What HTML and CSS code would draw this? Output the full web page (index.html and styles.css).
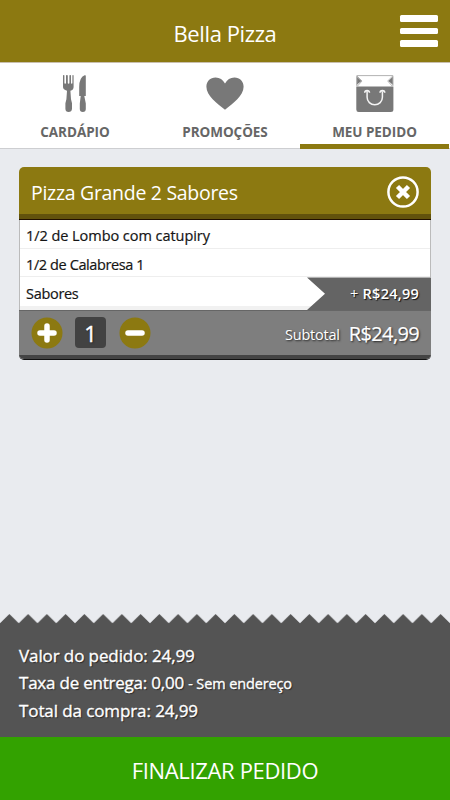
FILE: index.html
```html
<!DOCTYPE html>
<html lang="pt-BR">
<head>
<meta charset="utf-8">
<title>Bella Pizza</title>
<link rel="stylesheet" href="styles.css">
</head>
<body>
<header class="topbar">
  <h1><span>Bella Pizza</span></h1>
  <button class="menu" aria-label="Menu"><i></i><i></i><i></i></button>
</header>
<nav class="tabs">
  <a class="tab">
    <svg class="icon" width="38" height="40" viewBox="0 0 38 40"><path d="M7 2.600Q7 2 7.700 2t.7.600V10q0 .8.800.8T10 10V2.600q0-.6.900-.6t.9.600V10q0 .8.800.8t.8-.8V2.600q0-.6.800-.6t.8.600V10q0 .8.700.8t.7-.8V2.600q0-.6.600-.6t.6.600v11.500q0 3-3.200 3.600l.6 8.500 1 4v5.500Q15.700 39 12.600 39T9.400 35.700v-5.500l1-4 .6-8.500Q7 17 7 14.100zM29.800 2.800v20.200h-1.500l1.500 7.600V36q0 3-3 3t-3-3v-5.400l.9-7.600h-1.500V14q0-9.500 5.400-11.700 1.200-.4 1.200.5z"/></svg>
    <span class="name">CARDÁPIO</span>
  </a>
  <a class="tab">
    <svg class="icon" width="38" height="40" viewBox="0 0 38 40"><path d="M19 36.800C11 30.200.4 22.800.4 13.800.4 8.400 4.200 4.600 9.600 4.600c4.200 0 7.200 2.200 9.400 5.800 2.200-3.600 5.200-5.800 9.400-5.800 5.400 0 9.200 3.800 9.200 9.200 0 9-10.600 16.400-18.600 23z"/></svg>
    <span class="name">PROMOÇÕES</span>
  </a>
  <a class="tab active">
    <svg class="icon" width="38" height="40" viewBox="0 0 38 40"><path d="M.3 13.500H37.400V36.500a2.500 2.500 0 0 1-2.500 2.500h-32A2.500 2.500 0 0 1 .3 36.500z"/><path d="M.6 3.500V12l4.800-4zM37.100 3.500V12l-4.800-4z"/><path d="M.8 13V2.600h36.100V13M1 3l5 5-4.500 5M36.700 3l-5 5 4.500 5" fill="none" stroke="#aaa" stroke-width=".9"/><path d="M8.700 19.800a2.400 2.400 0 0 1 4.800 0M24 19.800a2.400 2.400 0 0 1 4.800 0M11.100 18.500v5.700a7.650 7.650 0 0 0 15.300 0v-5.700" fill="none" stroke="#f4f4f4" stroke-width="1.500"/></svg>
    <span class="name">MEU PEDIDO</span>
  </a>
</nav>
<main>
  <section class="card">
    <div class="card-head">
      <h2>Pizza Grande 2 Sabores</h2>
      <svg width="32" height="32" viewBox="0 0 32 32"><circle cx="16" cy="16" r="14.600" fill="none" stroke="#fff" stroke-width="2.500"/><path d="M10.500 10.500l11 11M21.500 10.500l-11 11" stroke="#fff" stroke-width="4.500"/></svg>
    </div>
    <div class="row"><span class="wide">1/2 de Lombo com catupiry</span></div>
    <div class="row"><span class="tight">1/2 de Calabresa 1</span></div>
    <div class="row last"><span>Sabores</span><div class="price"><span>+ <b>R$24,99</b></span></div></div>
    <div class="card-foot">
      <svg class="round" width="32" height="32" viewBox="0 0 32 32"><circle cx="16" cy="16" r="15.500"/><path d="M9 16h14M16 9v14"/></svg>
      <span class="qty">1</span>
      <svg class="round" width="32" height="32" viewBox="0 0 32 32"><circle cx="16" cy="16" r="15.500"/><path d="M9 16h14"/></svg>
      <span class="sub">Subtotal</span><span class="amount">R$24,99</span>
    </div>
  </section>
</main>
<svg class="zigzag" width="450" height="10"><defs><pattern id="teeth" width="18.750" height="10" patternUnits="userSpaceOnUse"><path d="M0 10V9.300L9.375 0l9.375 9.300V10z" fill="#545454"/></pattern></defs><rect width="450" height="10" fill="url(#teeth)"/></svg>
<section class="totals">
  <p>Valor do pedido: 24,99</p>
  <p class="fee">Taxa de entrega: 0,00 <small>- Sem endereço</small></p>
  <p>Total da compra: 24,99</p>
</section>
<button class="finish"><span>FINALIZAR PEDIDO</span></button>
</body>
</html>
```
FILE: styles.css
```css
* { box-sizing: border-box; }
body { margin: 0; height: 800px; display: flex; flex-direction: column; background: #e9ebef; font-family: "Open Sans", "Noto Sans", sans-serif; overflow: hidden; }
h1, h2, p { margin: 0; font-weight: 400; }
button { border: 0; padding: 0; font: inherit; }
span { white-space: nowrap; }
.topbar { height: 63px; flex: none; display: grid; grid-template-columns: 50px 1fr 50px; align-items: center; background: #8c7911; border-bottom: 1px solid #c9bfae; color: #fff; }
h1 { grid-column: 2; text-align: center; font-size: 22px; line-height: 30px; padding-top: 3px; letter-spacing: -.4px; }
.menu { display: flex; flex-direction: column; gap: 6px; background: none; }
.menu i { width: 38px; height: 6.700px; border-radius: 1.500px; background: #fff; }
.tabs { height: 86px; flex: none; display: grid; grid-template-columns: repeat(3, 1fr); background: #fff; border-bottom: 1px solid #cdced1; }
.tab { display: flex; flex-direction: column; align-items: center; padding-top: 10px; color: #666; }
.icon { fill: #787878; }
.name { margin-top: 9px; font-size: 13.500px; line-height: 20px; font-weight: 700; letter-spacing: -.05px; }
.active { border-bottom: 5px solid #8c7911; margin-bottom: -1px; margin-right: 1px; }
main { flex: 1; padding: 18px 19px 0; }
.card { height: 193px; border-radius: 5px; overflow: hidden; background: #fff; border-bottom: 1px solid #111; }
.card-head { height: 53px; display: flex; align-items: center; justify-content: space-between; padding: 0 12px 3px; background: linear-gradient(#8c7911 47px, #62520c 47px 52px, #221000 52px); color: #fff; }
h2 { font-size: 19.500px; letter-spacing: -.3px; }
.row { height: 28.700px; display: flex; align-items: center; padding: 4px 0 0 6px; border: solid #bbb; border-width: 0 1px; box-shadow: inset 0 -1px #eee; font-size: 14.500px; line-height: 20px; color: #151515; font-weight: 500; letter-spacing: -.3px; -webkit-text-stroke: .2px; }
.wide { letter-spacing: -.05px; }
.tight { letter-spacing: -.4px; }
.last { height: 32.600px; padding-top: 0; border-right: 0; box-shadow: inset 0 -4px #f1f1f1; justify-content: space-between; }
.price { width: 124px; height: 100%; display: flex; align-items: center; justify-content: flex-end; padding-right: 12px; color: #fff; background: #646464; clip-path: polygon(0 0, 100% 0, 100% 100%, 0 100%, 18px 50%); text-shadow: 1px 1px 1px #111; font-size: 14.500px; letter-spacing: .25px; -webkit-text-stroke: 0; }
.price b { font-weight: 600; }
.card-foot { height: 49px; display: flex; align-items: center; padding: 0 12px 4px; background: linear-gradient(#7e7e7e 44px, #444 44px); border-top: 1px solid #666; color: #fff; text-shadow: 1px 1px 2px #222; }
.round { fill: #8c7911; stroke: none; flex: none; }
.round path { stroke: #fff; stroke-width: 5.500; stroke-linecap: round; }
.qty { width: 31px; height: 31px; margin: 0 13px 0 12px; border-radius: 4px; background: #424242; font-size: 22px; line-height: 33px; text-align: center; -webkit-text-stroke: .4px; }
.sub { margin-left: auto; margin-right: 9px; padding-top: 4px; font-size: 14.500px; letter-spacing: -.2px; }
.amount { padding-top: 1px; font-size: 20px; letter-spacing: -.65px; -webkit-text-stroke: .2px; }
.zigzag { display: block; flex: none; }
.totals { height: 113px; flex: none; padding: 18px 19px 0; background: #545454; color: #fff; text-shadow: 1px 1px 1px #222; font-size: 17px; line-height: 27px; font-weight: 500; letter-spacing: -.1px; -webkit-text-stroke: .35px; }
.totals p { position: relative; top: -.5px; }
.totals .fee { letter-spacing: -.22px; }
small { font-size: 14.500px; letter-spacing: -.12px; }
.finish { height: 63px; flex: none; background: #33a200; color: #fff; font-size: 22px; padding-top: 3px; letter-spacing: -.35px; }
```
